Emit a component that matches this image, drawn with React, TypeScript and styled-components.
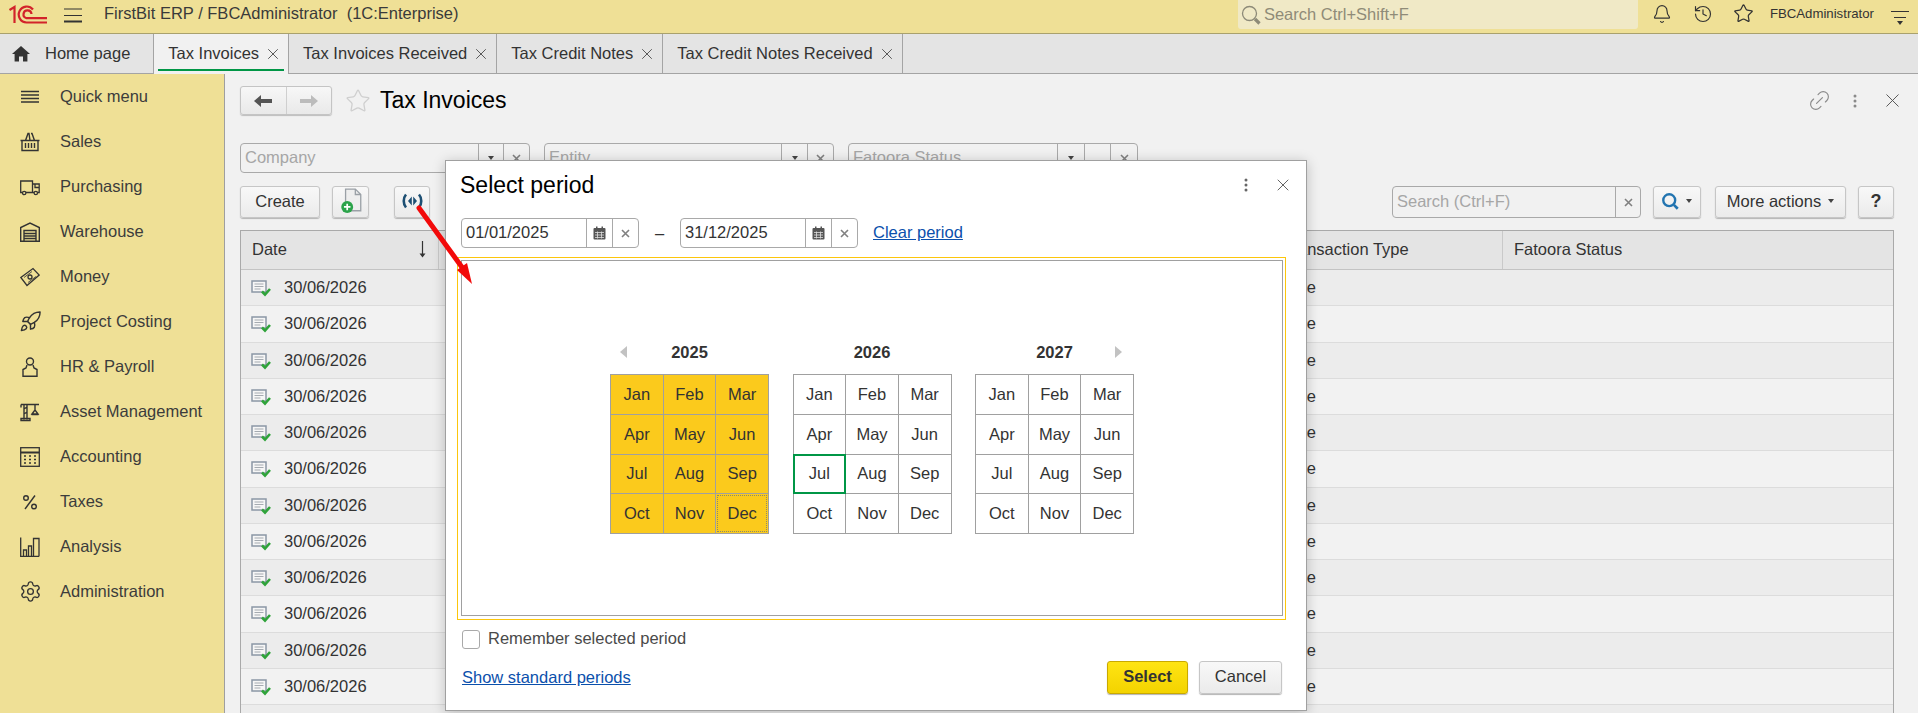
import styled, { createGlobalStyle } from "styled-components";
import { Bell, History, Star, X, Link2, Rocket, Settings } from "lucide-react";

const GlobalStyle = createGlobalStyle`
  html, body {
    margin: 0;
    padding: 0;
    overflow: hidden;
    background: #f1f1f1;
    font-family: "Liberation Sans", Arial, sans-serif;
    font-size: 16.5px;
    color: #333;
  }
`;

const Page = styled.div`
  position: relative;
  width: 1918px;
  height: 713px;
  overflow: hidden;
  display: flex;
  flex-direction: column;
`;

/* top bar */
const TopBar = styled.header`
  height: 33px;
  flex: none;
  display: flex;
  align-items: center;
  background: #efe096;
  border-bottom: 1px solid #a9a16d;
  box-sizing: content-box;
`;
const Logo = styled.svg`
  width: 38px;
  height: 19px;
  margin: -5px 0 0 9px;
  flex: none;
`;
const Burger = styled.svg`
  width: 18px;
  height: 16px;
  margin: -4px 0 0 17px;
  flex: none;
`;
const AppTitle = styled.span`
  margin: -6px 0 0 22px;
  white-space: pre;
  color: #3a3a3a;
`;
const GlobalSearch = styled.div`
  margin-left: auto;
  width: 400px;
  height: 29px;
  margin-top: -4px;
  background: #f0e9c6;
  border-radius: 0 0 3px 3px;
  display: flex;
  align-items: center;
  gap: 3px;
  padding-left: 3px;
  box-sizing: border-box;
  color: #8f8b78;
`;
const TopIcons = styled.div`
  display: flex;
  align-items: center;
  margin: -6px 0 0 0;
  color: #333;
`;
const TopIconSlot = styled.span<{ $w: number }>`
  width: ${(p) => p.$w}px;
  display: flex;
  justify-content: center;
`;
const UserName = styled.span`
  font-size: 13.2px;
  margin-left: 2px;
  color: #333;
`;
const TopMenu = styled.svg`
  width: 18px;
  height: 16px;
  margin: 2px 9px 0 17px;
`;

/* tabs */
const TabBar = styled.nav`
  height: 39px;
  flex: none;
  display: flex;
  background: #e4e4e4;
  border-bottom: 1px solid #a4a4a4;
`;
const Tab = styled.div<{ $active?: boolean }>`
  position: relative;
  display: flex;
  align-items: center;
  gap: 8px;
  padding: 0 9px 0 14px;
  border-right: 1px solid #a4a4a4;
  background: ${(p) => (p.$active ? "#f1f1f1" : "#e4e4e4")};
  white-space: nowrap;
  margin-bottom: ${(p) => (p.$active ? "-1px" : "0")};
  span { margin-top: -1px; }
`;
const HomeTab = styled(Tab)`
  gap: 15px;
  padding: 0 23px 0 12px;
`;
const TabMark = styled.i`
  position: absolute;
  left: 4px;
  right: 4px;
  bottom: 3px;
  height: 2px;
  background: #009646;
`;
const TabClose = styled(X)`
  width: 18px;
  height: 18px;
  margin: 0 -3px;
  color: #555;
  stroke-width: 1.3;
`;

/* body */
const Body = styled.div`
  flex: 1;
  display: flex;
  min-height: 0;
`;
const Sidebar = styled.aside`
  width: 224px;
  flex: none;
  background: #efe096;
  border-right: 1px solid #9f9f9f;
`;
const SideItem = styled.div`
  height: 45px;
  display: flex;
  align-items: center;
  gap: 20px;
  padding-left: 20px;
  color: #3c3c3c;
  svg { flex: none; width: 20px; height: 20px; color: #333; }
`;
const WideIcon = styled.span`
  display: flex;
  width: 20px;
  justify-content: center;
  svg { width: 23px; height: 23px; margin: 0 -2px; }
`;
const Content = styled.main`
  flex: 1;
  min-width: 0;
  padding: 12px 24px 0 15px;
  display: flex;
  flex-direction: column;
`;
const PageHead = styled.div`
  height: 29px;
  display: flex;
  align-items: center;
`;
const NavGroup = styled.div`
  display: flex;
  width: 92px;
  height: 29px;
  box-sizing: border-box;
  border: 1px solid #c4c4c4;
  border-radius: 3px;
  background: linear-gradient(#f7f7f7, #e9e9e9);
  box-shadow: 0 1px 1px #bdbdbd;
`;
const NavCell = styled.div<{ $w: number }>`
  width: ${(p) => p.$w}px;
  display: flex;
  align-items: center;
  justify-content: center;
  & + & { border-left: 1px solid #cfcfcf; }
`;
const FavStar = styled(Star)`
  width: 26px;
  height: 26px;
  margin-left: 13px;
  color: #cfcfcf;
  stroke-width: 1.2;
`;
const PageTitle = styled.h1`
  margin: 0 0 0 9px;
  font-size: 23px;
  font-weight: 400;
  color: #000;
`;
const PageTools = styled.div`
  margin-left: auto;
  display: flex;
  align-items: center;
  gap: 21px;
  margin-right: -10px;
  color: #8a8a8a;
`;
const LinkIcon = styled(Link2)`
  width: 25px;
  height: 25px;
  stroke-width: 1.1;
  transform: rotate(-45deg);
`;
const HeadClose = styled(X)`
  width: 23px;
  height: 23px;
  margin-left: 3px;
  stroke-width: 1;
  color: #555;
`;

const FilterRow = styled.div`
  margin-top: 28px;
  height: 30px;
  display: flex;
  gap: 14px;
  flex: none;
`;
const Field = styled.div<{ $w: number; $h?: number }>`
  width: ${(p) => p.$w}px;
  height: ${(p) => p.$h ?? 30}px;
  box-sizing: border-box;
  display: flex;
  flex: none;
  border: 1px solid #a9a9a9;
  border-radius: 4px;
  background: ${(p) => (p.$h ? "#fff" : "#f1f1f1")};
`;
const FieldText = styled.div<{ $muted?: boolean }>`
  flex: 1;
  min-width: 0;
  padding: 0 0 2px 4px;
  display: flex;
  align-items: center;
  white-space: nowrap;
  overflow: hidden;
  color: ${(p) => (p.$muted ? "#a6a6a6" : "#333")};
`;
const FieldCell = styled.div<{ $w: number }>`
  width: ${(p) => p.$w}px;
  flex: none;
  border-left: 1px solid #a9a9a9;
  display: flex;
  align-items: center;
  justify-content: center;
  color: #777;
  font-size: 13px;
`;
const Caret = styled.i<{ $gap?: number }>`
  width: 0;
  height: 0;
  border: 3.5px solid transparent;
  border-top: 4px solid #444;
  border-bottom: 0;
  margin-left: ${(p) => p.$gap ?? 0}px;
`;

const CommandBar = styled.div`
  margin-top: 13px;
  height: 32px;
  flex: none;
  display: flex;
  align-items: stretch;
`;
const Button = styled.button<{ $w: number; $gap?: number }>`
  width: ${(p) => p.$w}px;
  margin-left: ${(p) => p.$gap ?? 0}px;
  padding: 0 0 2px;
  box-sizing: border-box;
  display: flex;
  align-items: center;
  justify-content: center;
  font: inherit;
  color: #333;
  border: 1px solid #c6c6c6;
  border-radius: 3px;
  background: linear-gradient(#f8f8f8, #ebebeb);
  box-shadow: 0 1px 1px #b4b4b4;
`;
const BarSearch = styled(Field)`
  margin-left: auto;
  height: 32px;
`;
const HelpMark = styled.b`
  font-size: 18px;
`;

/* list behind the dialog */
const Table = styled.div`
  margin-top: 12px;
  border: 1px solid #a9a9a9;
  border-bottom: 0;
  flex: 1;
  min-height: 0;
  overflow: hidden;
  background: #ececec;
`;
const HeadRow = styled.div`
  height: 38px;
  display: grid;
  grid-template-columns: 198px 833px 231px 1fr;
  background: #e4e4e4;
  border-bottom: 1px solid #c3c3c3;
`;
const HeadCell = styled.div`
  display: flex;
  align-items: center;
  justify-content: space-between;
  padding: 0 11px 2px;
  border-right: 1px solid #c9c9c9;
  &:last-child { border-right: 0; }
`;
const Row = styled.div<{ $odd: boolean }>`
  height: 36.25px;
  box-sizing: border-box;
  display: grid;
  grid-template-columns: 198px 833px 231px 1fr;
  align-items: center;
  background: ${(p) => (p.$odd ? "#ececec" : "#f2f2f2")};
  border-bottom: 1px solid #dcdcdc;
`;
const DateCell = styled.div`
  display: flex;
  align-items: center;
  gap: 13px;
  padding-left: 10px;
  svg { margin-top: 2px; }
`;
const TypeCell = styled.div`
  padding-left: 11px;
`;

/* dialog */
const Dialog = styled.section`
  position: absolute;
  left: 445px;
  top: 160px;
  width: 862px;
  height: 551px;
  box-sizing: border-box;
  background: #fff;
  border: 1px solid #a0a0a0;
  box-shadow: 0 2px 12px rgba(0, 0, 0, 0.22);
  padding: 0 20px 0 11px;
  display: flex;
  flex-direction: column;
`;
const DialogHead = styled.div`
  height: 48px;
  flex: none;
  display: flex;
  align-items: center;
  padding-left: 3px;
`;
const DialogTitle = styled.h2`
  margin: 0;
  font-size: 23px;
  font-weight: 400;
  color: #000;
`;
const DialogTools = styled.div`
  margin-left: auto;
  margin-right: -7px;
  display: flex;
  align-items: center;
  gap: 25px;
  color: #666;
`;
const PeriodRow = styled.div`
  margin: 9px 0 0 4px;
  height: 30px;
  flex: none;
  display: flex;
  align-items: center;
`;
const Dash = styled.span`
  width: 41px;
  text-align: center;
`;
const TextLink = styled.a`
  color: #0b50ac;
  text-decoration: underline;
`;
const ClearLink = styled(TextLink)`
  margin: -2px 0 0 15px;
`;
const FocusFrame = styled.div`
  margin-top: 9px;
  height: 363px;
  flex: none;
  box-sizing: border-box;
  border: 1px solid #fcc60c;
  padding: 2px 2px 3px 3px;
`;
const CalendarPane = styled.div`
  height: 100%;
  box-sizing: border-box;
  border: 1px solid #a0a0a0;
  display: flex;
  align-items: center;
  justify-content: center;
  gap: 23.5px;
`;
const YearCol = styled.div`
  width: 159px;
`;
const YearHead = styled.div`
  height: 20px;
  margin-bottom: 12px;
  display: grid;
  grid-template-columns: 1fr auto 1fr;
  align-items: center;
  font-weight: 700;
`;
const Pager = styled.i<{ $right?: boolean }>`
  width: 0;
  height: 0;
  border-top: 6.5px solid transparent;
  border-bottom: 6.5px solid transparent;
  ${(p) =>
    p.$right
      ? "grid-column: 3; justify-self: end; margin-right: 12px; border-left: 7px solid #c2c2c2;"
      : "grid-column: 1; justify-self: start; margin-left: 10px; border-right: 7px solid #c2c2c2;"}
`;
const YearLabel = styled.span`
  grid-column: 2;
  grid-row: 1;
`;
const MonthGrid = styled.div`
  display: grid;
  grid-template-columns: repeat(3, 1fr);
  grid-auto-rows: 38.75px;
  gap: 1px;
  padding: 1px;
  background: #a0a0a0;
`;
const Month = styled.div<{ $on?: boolean; $now?: boolean; $cursor?: boolean }>`
  display: flex;
  align-items: center;
  justify-content: center;
  background: ${(p) => (p.$on ? "#fbca1c" : "#fff")};
  ${(p) => p.$now && "outline: 2px solid #009646; outline-offset: -1px; z-index: 1;"}
  ${(p) => p.$cursor && "outline: 1px dotted #8a8a6a; outline-offset: -2px;"}
`;
const RememberRow = styled.label`
  margin: 10px 0 0 5px;
  height: 19px;
  flex: none;
  display: flex;
  align-items: center;
  gap: 8px;
  color: #4a4a4a;
`;
const RememberText = styled.span`
  margin-top: -2px;
`;
const CheckBox = styled.span`
  width: 18px;
  height: 19px;
  box-sizing: border-box;
  border: 1px solid #a9a9a9;
  border-radius: 3px;
  background: #fff;
`;
const DialogFoot = styled.div`
  margin: 12px 4px 0 5px;
  height: 33px;
  flex: none;
  display: flex;
  align-items: stretch;
  gap: 11px;
`;
const FootLink = styled(TextLink)`
  margin-right: auto;
  align-self: center;
`;
const PrimaryButton = styled(Button)`
  font-weight: 700;
  border-color: #c9a900;
  background: linear-gradient(#ffe413, #f3d300);
`;

const PointerArrow = styled.svg`
  position: absolute;
  left: 410px;
  top: 200px;
  width: 70px;
  height: 90px;
  pointer-events: none;
`;

const Dots = () => (
  <svg width="4" height="14" viewBox="0 0 4 14" fill="currentColor">
    <circle cx="2" cy="2" r="1.5" />
    <circle cx="2" cy="7" r="1.5" />
    <circle cx="2" cy="12" r="1.5" />
  </svg>
);

const CalendarIcon = () => (
  <svg width="13" height="14" viewBox="0 0 13 14">
    <rect x="0.5" y="2" width="12" height="11.5" rx="1" fill="#555" />
    <rect x="3" y="0.5" width="1.5" height="3" fill="#555" />
    <rect x="8.5" y="0.5" width="1.5" height="3" fill="#555" />
    <path d="M2 6.5h9M2 9h9M2 11.5h9M4.5 5.5v7M8.5 5.5v7" stroke="#ddd" strokeWidth="0.8" />
  </svg>
);

const SmallCross = () => (
  <svg width="9" height="9" viewBox="0 0 9 9" stroke="#808080" strokeWidth="1.6">
    <path d="M1 1l7 7M8 1l-7 7" />
  </svg>
);

const SearchGlyph = ({ color, size, weight }: { color: string; size: number; weight: number }) => (
  <svg width={size} height={size} viewBox="0 0 20 20" fill="none" stroke={color}>
    <circle cx="8.5" cy="8.5" r="7" strokeWidth={weight} />
    <path d="M14 14l4.5 4.5" strokeWidth="3.2" />
  </svg>
);

const RowIcon = () => (
  <svg width="20" height="17" viewBox="0 0 20 17">
    <rect x="1" y="1" width="14" height="11" fill="#f6f6f6" stroke="#8b97a5" strokeWidth="1.5" />
    <path d="M3.5 4h9M3.5 6.5h9M3.5 9h6" stroke="#a4aab0" strokeWidth="1" />
    <path d="M11 11.5l3 3 5-5.5" fill="none" stroke="#2fa33a" strokeWidth="2.6" />
  </svg>
);

const sideIcons: Record<string, React.ReactNode> = {
  menu: (
    <svg viewBox="0 0 20 20" stroke="currentColor" strokeWidth="1.3">
      <path d="M1 4.5h18M1 8h18M1 11.5h18M1 15h18" />
    </svg>
  ),
  basket: (
    <svg viewBox="0 0 20 20" fill="none" stroke="currentColor" strokeWidth="1.4">
      <path d="M0.5 8.5h19M2 8.5v10h16v-10M5.5 11v5M8.5 11v5M11.5 11v5M14.5 11v5M5.5 8.5l2.5-7h1l1 7M14.5 8.5l-2.5-7h-1" />
    </svg>
  ),
  truck: (
    <svg viewBox="0 0 20 20" fill="none" stroke="currentColor" strokeWidth="1.3">
      <path d="M2.5 15.5H0.7V4h11.8v11.5H6M12.5 7h6.7v8.5h-1.5M12.5 15.5H14M15 7v3.5h4" />
      <circle cx="4.2" cy="16" r="1.7" />
      <circle cx="15.8" cy="16" r="1.7" />
    </svg>
  ),
  warehouse: (
    <svg viewBox="0 0 20 20" fill="none" stroke="currentColor" strokeWidth="1.4">
      <path d="M0.7 19.3V5.5L10 1l9.3 4.5v13.8z" />
      <path d="M4 19V8.5h12V19M4 11.5h12M4 14h12M4 16.5h12" />
    </svg>
  ),
  money: (
    <svg viewBox="0 0 20 20" fill="none" stroke="currentColor" strokeWidth="1.3">
      <path d="M0.8 10.5L13 1.5l6.2 6.5L7 18.5z" />
      <path d="M4 10.5l8-6M8 15.5l8-6" strokeWidth="0.8" />
      <circle cx="10" cy="10" r="2" />
    </svg>
  ),
  rocket: <WideIcon><Rocket strokeWidth={1.5} /></WideIcon>,
  person: (
    <svg viewBox="0 0 20 20" fill="none" stroke="currentColor" strokeWidth="1.4">
      <circle cx="10" cy="4.5" r="3.5" />
      <path d="M7 8l-1 3-3 1.5v6.8h14v-6.8L14 11l-1-3" />
    </svg>
  ),
  crane: (
    <svg viewBox="0 0 20 20" fill="none" stroke="currentColor" strokeWidth="1.4">
      <path d="M1 2.5h18M4 2.5v15M7 2.5v15M4 7l3-2M4 12l3-2M1 18.5h9v-2H1zM1 2.5v3" />
      <path d="M15 2.5v5M12 12l3-4 3 4zM11.5 12.5h7" />
    </svg>
  ),
  calc: (
    <svg viewBox="0 0 20 20" fill="none" stroke="currentColor" strokeWidth="1.3">
      <rect x="0.7" y="0.7" width="18.6" height="18.6" />
      <path d="M0.7 5.5h18.6" strokeWidth="2" />
      <path d="M4 9h2M9 9h2M14 9h2M4 12.5h2M9 12.5h2M14 12.5h2M4 16h2M9 16h2M14 16h2" />
    </svg>
  ),
  percent: (
    <svg viewBox="0 0 20 20" fill="none" stroke="currentColor" strokeWidth="1.4">
      <circle cx="6" cy="6" r="2.3" />
      <circle cx="14" cy="14.5" r="2.3" />
      <path d="M15 3.5L5 17" />
    </svg>
  ),
  chart: (
    <svg viewBox="0 0 20 20" fill="none" stroke="currentColor" strokeWidth="1.3">
      <path d="M0.7 0.5v19h18.6M3.5 19v-6h3v6M8.5 19V9h3v10M13.5 19V1.5h5.5V19" />
    </svg>
  ),
  gear: <WideIcon><Settings strokeWidth={1.4} /></WideIcon>,
};

const menuItems = [
  ["menu", "Quick menu"],
  ["basket", "Sales"],
  ["truck", "Purchasing"],
  ["warehouse", "Warehouse"],
  ["money", "Money"],
  ["rocket", "Project Costing"],
  ["person", "HR & Payroll"],
  ["crane", "Asset Management"],
  ["calc", "Accounting"],
  ["percent", "Taxes"],
  ["chart", "Analysis"],
  ["gear", "Administration"],
];

const tabs = ["Tax Invoices", "Tax Invoices Received", "Tax Credit Notes", "Tax Credit Notes Received"];
const months = ["Jan", "Feb", "Mar", "Apr", "May", "Jun", "Jul", "Aug", "Sep", "Oct", "Nov", "Dec"];
const years = [2025, 2026, 2027];
const rows = Array.from({ length: 12 }, (_, i) => i);

function App() {
  return (
    <Page>
      <GlobalStyle />
      <TopBar>
        <Logo viewBox="0 0 38 19" fill="none" stroke="#d2232a" strokeWidth="2.2">
          <path d="M0.5 5L5.5 2v16" />
          <path d="M24 4.5A8 8 0 1 0 17.5 17.5H38" />
          <path d="M22.5 9A4 4 0 1 0 17.5 13.2H38" />
        </Logo>
        <Burger viewBox="0 0 18 16" stroke="#333">
          <path d="M0 2h18M0 8.5h18" strokeWidth="1" />
          <path d="M0 14.5h18" strokeWidth="2" />
        </Burger>
        <AppTitle>FirstBit ERP / FBCAdministrator  (1C:Enterprise)</AppTitle>
        <GlobalSearch>
          <SearchGlyph color="#8d8a78" size={20} weight={1.3} />
          Search Ctrl+Shift+F
        </GlobalSearch>
        <TopIcons>
          <TopIconSlot $w={48}><Bell size={20} strokeWidth={1.4} /></TopIconSlot>
          <TopIconSlot $w={34}><History size={20} strokeWidth={1.4} /></TopIconSlot>
          <TopIconSlot $w={48}><Star size={21} strokeWidth={1.4} /></TopIconSlot>
          <UserName>FBCAdministrator</UserName>
        </TopIcons>
        <TopMenu viewBox="0 0 18 16" stroke="#333">
          <path d="M0 1.5h18M3 7.5h12" strokeWidth="1" fill="none" />
          <path d="M6 11h6l-3 4z" fill="#333" stroke="none" />
        </TopMenu>
      </TopBar>

      <TabBar>
        <HomeTab>
          <svg width="18" height="17" viewBox="0 0 18 17" fill="#333">
            <path d="M9 1L0 9h2.6v7.5h4.4v-5h4v5h4.4V9H18z" />
          </svg>
          <span>Home page</span>
        </HomeTab>
        {tabs.map((name, i) => (
          <Tab key={name} $active={i === 0}>
            <span>{name}</span>
            <TabClose />
            {i === 0 && <TabMark />}
          </Tab>
        ))}
      </TabBar>

      <Body>
        <Sidebar>
          {menuItems.map(([icon, label]) => (
            <SideItem key={label}>
              {sideIcons[icon]}
              <span>{label}</span>
            </SideItem>
          ))}
        </Sidebar>
        <Content>
          <PageHead>
            <NavGroup>
              <NavCell $w={45}>
                <svg width="18" height="14" viewBox="0 0 18 14" fill="#555">
                  <path d="M0 7l7-6v4h11v4H7v4z" />
                </svg>
              </NavCell>
              <NavCell $w={45}>
                <svg width="18" height="14" viewBox="0 0 18 14" fill="#bcbcbc">
                  <path d="M18 7l-7-6v4H0v4h11v4z" />
                </svg>
              </NavCell>
            </NavGroup>
            <FavStar />
            <PageTitle>Tax Invoices</PageTitle>
            <PageTools>
              <LinkIcon />
              <Dots />
              <HeadClose />
            </PageTools>
          </PageHead>

          <FilterRow>
            <Field $w={290}>
              <FieldText $muted>Company</FieldText>
              <FieldCell $w={24}><Caret /></FieldCell>
              <FieldCell $w={25}><SmallCross /></FieldCell>
            </Field>
            <Field $w={290}>
              <FieldText $muted>Entity</FieldText>
              <FieldCell $w={25}><Caret /></FieldCell>
              <FieldCell $w={25}><SmallCross /></FieldCell>
            </Field>
            <Field $w={290}>
              <FieldText $muted>Fatoora Status</FieldText>
              <FieldCell $w={26}><Caret /></FieldCell>
              <FieldCell $w={25} />
              <FieldCell $w={26}><SmallCross /></FieldCell>
            </Field>
          </FilterRow>

          <CommandBar>
            <Button $w={80}>Create</Button>
            <Button $w={37} $gap={12}>
              <svg width="22" height="26" viewBox="0 0 20 24">
                <path d="M5 1h9l5 5v15H5z" fill="#eee" stroke="#9aa0a6" strokeWidth="1.2" />
                <path d="M14 1v5h5" fill="none" stroke="#9aa0a6" strokeWidth="1.2" />
                <circle cx="6.5" cy="17.5" r="5.5" fill="#2ba34a" />
                <path d="M3.5 17.5h6M6.5 14.5v6" stroke="#fff" strokeWidth="1.6" />
              </svg>
            </Button>
            <Button $w={36} $gap={25}>
              <svg width="21" height="16" viewBox="0 0 21 16" fill="none" stroke="#1d4f73" strokeWidth="2.6">
                <path d="M4 1.5C1 5 1 11 4 14.5M17 1.5C20 5 20 11 17 14.5" />
                <path d="M9.8 3.5L6 8l3.8 4.5zM11.2 3.5L15 8l-3.8 4.5z" fill="#1d4f73" stroke="none" />
              </svg>
            </Button>
            <BarSearch $w={249}>
              <FieldText $muted>Search (Ctrl+F)</FieldText>
              <FieldCell $w={24}><SmallCross /></FieldCell>
            </BarSearch>
            <Button $w={48} $gap={12}>
              <SearchGlyph color="#2274b0" size={17} weight={2.8} />
              <Caret $gap={7} />
            </Button>
            <Button $w={131} $gap={14}>
              More actions
              <Caret $gap={7} />
            </Button>
            <Button $w={36} $gap={12}>
              <HelpMark>?</HelpMark>
            </Button>
          </CommandBar>

          <Table>
            <HeadRow>
              <HeadCell>
                Date
                <svg width="9" height="17" viewBox="0 0 9 17" fill="none" stroke="#333">
                  <path d="M4.5 0v15" strokeWidth="1.2" />
                  <path d="M1.5 12.5h6L4.5 16.5z" fill="#333" stroke="none" />
                </svg>
              </HeadCell>
              <HeadCell />
              <HeadCell>Transaction Type</HeadCell>
              <HeadCell>Fatoora Status</HeadCell>
            </HeadRow>
            {rows.map((i) => (
              <Row key={i} $odd={i % 2 === 0}>
                <DateCell>
                  <RowIcon />
                  30/06/2026
                </DateCell>
                <span />
                <TypeCell>Sale</TypeCell>
              </Row>
            ))}
          </Table>
        </Content>
      </Body>

      <Dialog>
        <DialogHead>
          <DialogTitle>Select period</DialogTitle>
          <DialogTools>
            <Dots />
            <X size={20} strokeWidth={1.1} color="#555" />
          </DialogTools>
        </DialogHead>
        <PeriodRow>
          <Field $w={178} $h={30}>
            <FieldText>01/01/2025</FieldText>
            <FieldCell $w={25}><CalendarIcon /></FieldCell>
            <FieldCell $w={25}><SmallCross /></FieldCell>
          </Field>
          <Dash>–</Dash>
          <Field $w={178} $h={30}>
            <FieldText>31/12/2025</FieldText>
            <FieldCell $w={25}><CalendarIcon /></FieldCell>
            <FieldCell $w={25}><SmallCross /></FieldCell>
          </Field>
          <ClearLink>Clear period</ClearLink>
        </PeriodRow>
        <FocusFrame>
          <CalendarPane>
            {years.map((year, y) => (
              <YearCol key={year}>
                <YearHead>
                  {y === 0 && <Pager />}
                  <YearLabel>{year}</YearLabel>
                  {y === 2 && <Pager $right />}
                </YearHead>
                <MonthGrid>
                  {months.map((m, i) => (
                    <Month
                      key={m}
                      $on={y === 0}
                      $now={y === 1 && i === 6}
                      $cursor={y === 0 && i === 11}
                    >
                      {m}
                    </Month>
                  ))}
                </MonthGrid>
              </YearCol>
            ))}
          </CalendarPane>
        </FocusFrame>
        <RememberRow>
          <CheckBox />
          <RememberText>Remember selected period</RememberText>
        </RememberRow>
        <DialogFoot>
          <FootLink>Show standard periods</FootLink>
          <PrimaryButton $w={81}>Select</PrimaryButton>
          <Button $w={83}>Cancel</Button>
        </DialogFoot>
      </Dialog>

      <PointerArrow viewBox="0 0 70 90">
        <path d="M9 8L54 70" stroke="#f20a0a" strokeWidth="5" strokeLinecap="round" />
        <path d="M62 84L47 70L57 63z" fill="#f20a0a" />
      </PointerArrow>
    </Page>
  );
}

export default App;
